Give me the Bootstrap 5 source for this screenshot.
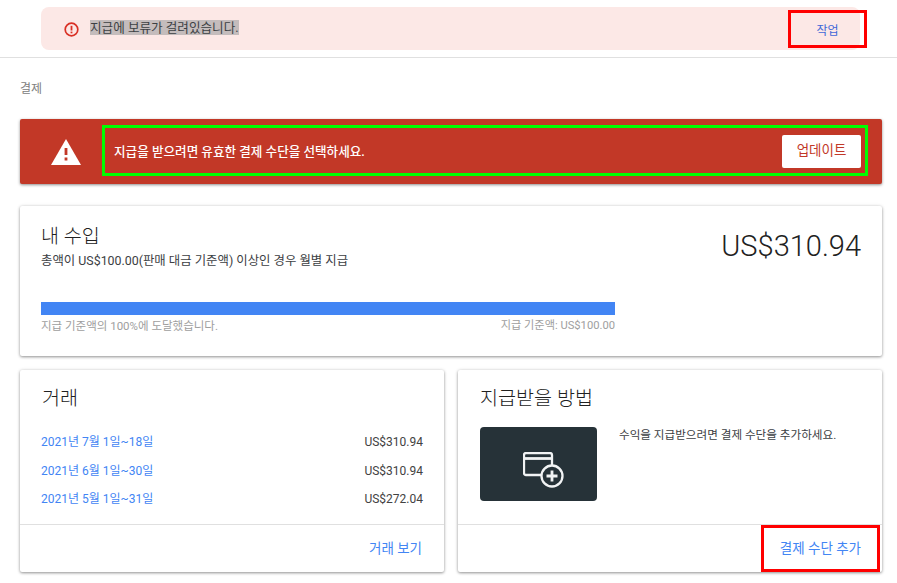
<!DOCTYPE html>
<html lang="ko">
<head>
    <meta charset="UTF-8">
    <meta name="viewport" content="width=device-width, initial-scale=1.0">
    <title>결제</title>
    <link href="https://cdn.jsdelivr.net/npm/bootstrap@5.3.0/dist/css/bootstrap.min.css" rel="stylesheet">
    <style>
        html, body { height: 583px; overflow: hidden; }
        body { font-family: Roboto, "Noto Sans CJK KR", sans-serif; color: #212121; background: #fff; font-size: 12px; }
        .top-strip { height: 58px; padding: 7px 37px 0 41px; border-bottom: 1px solid #e0e0e0; }
        .hold-banner { height: 43px; background: #fce8e6; border-radius: 8px; padding-left: 23px; color: #3c4043; }
        .hold-icon { margin-top: 1px; }
        .hold-text { background: #c4bcbc; font-size: 12.6px; line-height: 15px; margin-left: 11px; margin-top: -2px; }
        .action-box { width: 79px; height: 38px; border: 3px solid #f00; color: #4169d8; font-size: 12px; margin-top: 3px; margin-right: -7px; padding-top: 4px; }
        .crumb { height: 61px; padding: 23px 0 0 20px; color: #808080; font-size: 12px; line-height: 16px; }
        .page-area { padding: 0 15px 0 20px; }
        .red-banner { height: 65px; background: #c23827; border-radius: 2px; box-shadow: 0 1px 3px rgba(0,0,0,.45); padding: 6px 14px 0 0; }
        .warn-cell { width: 82px; height: 53px; padding-left: 10px; }
        .green-box { height: 51px; border: 3px solid #0f0; padding: 0 4px 0 9px; color: #fff; font-weight: 500; font-size: 12.6px; }
        .green-msg { padding-top: 4px; }
        .update-btn { width: 79px; height: 33px; margin-top: 2px; background: #fff; color: #c23827; border-radius: 2px; font-size: 13.5px; font-weight: 400; padding-bottom: 3px; }
        .pane { background: #fff; border: 0; border-radius: 2px; box-shadow: 0 1px 3px rgba(0,0,0,.4), 0 0 4px rgba(0,0,0,.08); }
        .earn-pane { height: 150px; margin-top: 22px; padding: 18px 21px 0; }
        .pane-title { font-size: 19.6px; font-weight: 300; line-height: 26px; color: #212121; }
        .earn-sub { font-size: 12.4px; line-height: 16px; margin-top: 3px; color: #3c4043; }
        .earn-amount { font-size: 29px; font-weight: 300; line-height: 36px; margin-top: 4px; }
        .goal-wrap { width: 574px; margin-top: 33px; }
        .goal-bar { height: 13px; background: #4285f4; }
        .goal-note { color: #9e9e9e; font-size: 11.5px; line-height: 14px; margin-top: 4px; }
        .goal-limit { font-size: 11.2px; }
        .pair-row { margin-top: 14px; gap: 14px; }
        .half-pane { width: 424px; height: 202px; display: flex; flex-direction: column; }
        .half-body { height: 155px; padding: 16px 21px 0 22px; border-bottom: 1px solid #e0e0e0; }
        .half-foot { flex: 1; padding-right: 22px; position: relative; }
        .txn-list { margin: 21px 0 0 -1px; }
        .txn-row { height: 28.5px; font-size: 12px; line-height: 18px; color: #424242; }
        .txn-row a { color: #4285f4; text-decoration: none; }
        .foot-link { color: #4285f4; text-decoration: none; font-size: 13.5px; }
        .tile-row { margin-top: 15px; }
        .card-tile { width: 117px; height: 74px; background: #263238; border-radius: 4px; padding: 12px 0 0 10px; }
        .method-text { font-size: 11.6px; line-height: 16px; margin-left: 22px; color: #3c4043; }
        .add-box { width: 119px; height: 47px; border: 3px solid #f00; position: absolute; right: 2px; top: 0; padding-right: 16px; }
    </style>
</head>
<body>

    <div class="top-strip">
        <div class="hold-banner d-flex align-items-center justify-content-between">
            <div class="d-flex align-items-center">
                <svg class="hold-icon" width="15" height="15" viewBox="0 0 15 15" fill="none">
                    <circle cx="7.5" cy="7.5" r="6.3" stroke="#d93025" stroke-width="1.7"/>
                    <rect x="6.6" y="3.8" width="1.8" height="4.7" fill="#d93025"/>
                    <rect x="6.6" y="9.6" width="1.8" height="1.7" fill="#d93025"/>
                </svg>
                <span class="hold-text">지급에 보류가 걸려있습니다.</span>
            </div>
            <div class="action-box align-self-start d-flex align-items-center justify-content-center">작업</div>
        </div>
    </div>

    <div class="crumb">결제</div>

    <div class="page-area">
        <div class="red-banner d-flex">
            <div class="warn-cell d-flex align-items-center justify-content-center flex-shrink-0">
                <svg width="30" height="26" viewBox="0 0 30 26">
                    <path d="M15 0 L30 26 L0 26 Z" fill="#fff"/>
                    <rect x="13.6" y="9" width="2.8" height="7" fill="#c23827"/>
                    <rect x="13.6" y="18.5" width="2.8" height="3" fill="#c23827"/>
                </svg>
            </div>
            <div class="green-box flex-grow-1 d-flex align-items-center justify-content-between">
                <span class="green-msg">지급을 받으려면 유효한 결제 수단을 선택하세요.</span>
                <span class="update-btn d-flex align-items-center justify-content-center">업데이트</span>
            </div>
        </div>

        <div class="pane earn-pane">
            <div class="d-flex justify-content-between">
                <div>
                    <div class="pane-title">내 수입</div>
                    <div class="earn-sub">총액이 US$100.00(판매 대금 기준액) 이상인 경우 월별 지급</div>
                </div>
                <div class="earn-amount">US$310.94</div>
            </div>
            <div class="goal-wrap">
                <div class="goal-bar"></div>
                <div class="goal-note d-flex justify-content-between">
                    <span>지급 기준액의 100%에 도달했습니다.</span>
                    <span class="goal-limit">지급 기준액: US$100.00</span>
                </div>
            </div>
        </div>

        <div class="pair-row d-flex">
            <div class="pane half-pane">
                <div class="half-body">
                    <div class="pane-title">거래</div>
                    <div class="txn-list">
                        <div class="txn-row d-flex justify-content-between"><a href="#">2021년 7월 1일~18일</a><span>US$310.94</span></div>
                        <div class="txn-row d-flex justify-content-between"><a href="#">2021년 6월 1일~30일</a><span>US$310.94</span></div>
                        <div class="txn-row d-flex justify-content-between"><a href="#">2021년 5월 1일~31일</a><span>US$272.04</span></div>
                    </div>
                </div>
                <div class="half-foot d-flex align-items-center justify-content-end">
                    <a href="#" class="foot-link">거래 보기</a>
                </div>
            </div>

            <div class="pane half-pane">
                <div class="half-body">
                    <div class="pane-title">지급받을 방법</div>
                    <div class="tile-row d-flex">
                        <div class="card-tile d-flex align-items-center justify-content-center flex-shrink-0">
                            <svg width="41" height="36" viewBox="0 0 41 36" fill="none" stroke="#f1f3f4" stroke-width="2.3">
                                <path d="M18 23 H3 a2 2 0 0 1 -2 -2 V3 a2 2 0 0 1 2 -2 H27 a2 2 0 0 1 2 2 V13"/>
                                <path d="M1 6.5 H29" stroke-width="2.8"/>
                                <circle cx="29" cy="24" r="10.5" fill="#263238"/>
                                <path d="M29 18.5 V29.5 M23.5 24 H34.5" stroke-width="2.8"/>
                            </svg>
                        </div>
                        <div class="method-text">수익을 지급받으려면 결제 수단을 추가하세요.</div>
                    </div>
                </div>
                <div class="half-foot">
                    <div class="add-box d-flex align-items-center justify-content-end">
                        <a href="#" class="foot-link">결제 수단 추가</a>
                    </div>
                </div>
            </div>
        </div>
    </div>

    <script src="https://cdn.jsdelivr.net/npm/bootstrap@5.3.0/dist/js/bootstrap.bundle.min.js"></script>
</body>
</html>
